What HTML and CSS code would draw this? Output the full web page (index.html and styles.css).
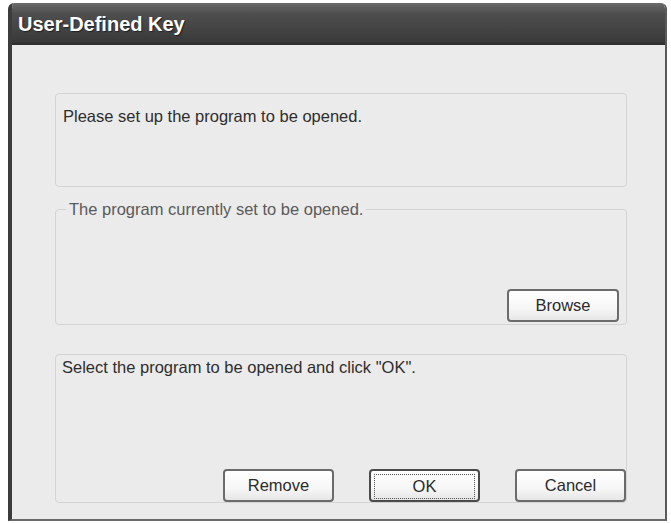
FILE: index.html
```html
<!DOCTYPE html>
<html>
<head>
<meta charset="utf-8">
<link rel="stylesheet" href="styles.css">
</head>
<body>
<div class="window">
  <div class="titlebar">User-Defined Key</div>
  <div class="content">
    <div class="panel panel-info">
      <p class="msg">Please set up the program to be opened.</p>
    </div>
    <fieldset class="panel group">
      <legend class="legend">The program currently set to be opened.</legend>
      <div class="group-body">
        <button class="btn">Browse</button>
      </div>
    </fieldset>
    <div class="panel panel-select">
      <p class="msg msg-select">Select the program to be opened and click "OK".</p>
      <div class="actions">
        <button class="btn">Remove</button>
        <button class="btn btn-default"><span class="focus">OK</span></button>
        <button class="btn">Cancel</button>
      </div>
    </div>
  </div>
</div>
</body>
</html>
```

FILE: styles.css
```css
html, body {
  margin: 0;
  padding: 0;
  background: #ffffff;
}
body {
  padding: 3px 0 0 8px;
  font-family: "Liberation Sans", Arial, sans-serif;
}
.window {
  width: 659px;
  height: 518px;
  box-sizing: border-box;
  display: flex;
  flex-direction: column;
  background: #ebebeb;
  border-left: 4px solid #3c3c3c;
  border-right: 2px solid #5a5a5a;
  border-bottom: 2px solid #6a6a6a;
  border-radius: 6px 6px 0 0;
  overflow: hidden;
}
.titlebar {
  height: 42px;
  box-sizing: border-box;
  padding: 10px 0 0 10px;
  margin-left: -4px;
  margin-right: -2px;
  background: linear-gradient(to bottom, #6a6a6a 0%, #4e4e4e 25%, #444444 60%, #3a3a3a 90%, #2e2e2e 100%);
  color: #ffffff;
  font-weight: bold;
  font-size: 20px;
  line-height: 22px;
  letter-spacing: 0;
  text-shadow: 1px 1px 1px #222;
}
.content {
  flex: 1;
  display: flex;
  flex-direction: column;
  padding: 48px 38px 0 43px;
}
.panel {
  border: 1px solid #d3d3d3;
  border-radius: 4px;
  box-sizing: border-box;
}
.panel-info {
  height: 94px;
  padding: 13px 7px 0;
}
.msg {
  margin: 0;
  font-size: 16.5px;
  color: #2e2e2e;
}
.group {
  margin: 13px 0 0;
  min-width: 0;
  padding: 0 7px 2px 10px;
}
.legend {
  padding: 0 3px;
  font-size: 16.5px;
  color: #5a5a5a;
}
.group-body {
  height: 103px;
  display: flex;
  justify-content: flex-end;
  align-items: flex-end;
}
.btn {
  width: 112px;
  height: 33px;
  box-sizing: border-box;
  border: 2px solid #6b6b6b;
  border-radius: 4px;
  background: linear-gradient(to bottom, #ffffff 0%, #f7f7f7 60%, #e6e6e6 100%);
  font-family: "Liberation Sans", Arial, sans-serif;
  font-size: 16.5px;
  color: #2b2b2b;
  padding: 0;
}
.panel-select {
  margin-top: 29px;
  height: 149px;
  padding: 3px 0 0 6px;
  display: flex;
  flex-direction: column;
}
.actions {
  flex: 1;
  display: flex;
  justify-content: flex-end;
  align-items: flex-end;
  gap: 35px;
}
.actions .btn {
  width: 111px;
}
.btn-default {
  border-color: #4a4a4a;
  padding: 3px;
}
.focus {
  display: flex;
  align-items: center;
  justify-content: center;
  height: 100%;
  border: 1px dotted #555;
}
```
